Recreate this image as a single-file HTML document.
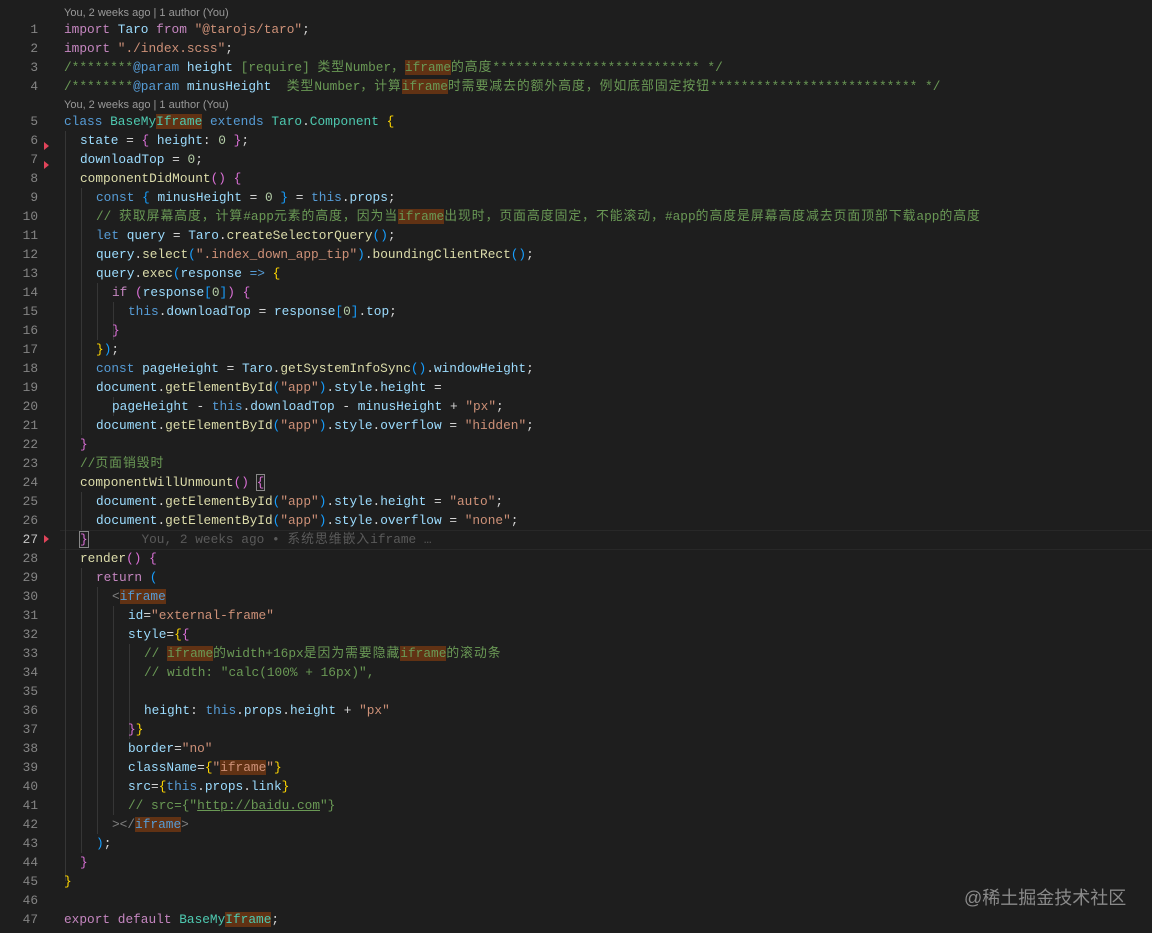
<!DOCTYPE html>
<html><head><meta charset="utf-8"><style>
body{margin:0;width:1152px;height:933px;background:#1e1e1e;overflow:hidden;position:relative;font-family:"Liberation Mono","Noto Sans CJK SC",monospace;font-size:12.8px;color:#d4d4d4}
.l{position:absolute;left:0;height:19px;line-height:19px;white-space:pre;width:1152px}
.ln{position:absolute;left:0;width:38px;text-align:right;color:#858585}
.cd{position:absolute;left:64px}
.lens{position:absolute;left:64px;font-family:"Liberation Sans",sans-serif;font-size:11px;color:#999;height:16px;line-height:16px}
.k{color:#c586c0}.b{color:#569cd6}.v{color:#9cdcfe}.t{color:#4ec9b0}.f{color:#dcdcaa}.s{color:#ce9178}.c{color:#6a9955}.n{color:#b5cea8}.g{color:#808080}
.y1{color:#ffd700}.y2{color:#da70d6}.y3{color:#179fff}
.h{background:#613214}
.z{letter-spacing:1px}
.ig{position:absolute;width:1px;background:#363636}
.mk{position:absolute;left:44px;width:0;height:0;border-top:4px solid transparent;border-bottom:4px solid transparent;border-left:5px solid #e0445a}
</style></head><body>
<div class="lens" style="top:5px">You, 2 weeks ago | 1 author (You)</div>
<div class="lens" style="top:97px">You, 2 weeks ago | 1 author (You)</div>
<div style="position:absolute;left:60px;top:530px;width:1092px;height:18px;border-top:1px solid #282828;border-bottom:1px solid #282828"></div>
<div class="ig" style="left:65px;top:131px;height:750px"></div>
<div class="ig" style="left:81px;top:188px;height:247px"></div>
<div class="ig" style="left:81px;top:492px;height:38px"></div>
<div class="ig" style="left:81px;top:568px;height:285px"></div>
<div class="ig" style="left:97px;top:283px;height:57px"></div>
<div class="ig" style="left:97px;top:587px;height:247px"></div>
<div class="ig" style="left:113px;top:302px;height:38px"></div>
<div class="ig" style="left:113px;top:397px;height:19px"></div>
<div class="ig" style="left:113px;top:606px;height:209px"></div>
<div class="ig" style="left:129px;top:644px;height:95px"></div>
<div class="mk" style="top:142px"></div><div class="mk" style="top:161px"></div><div class="mk" style="top:535px"></div>
<div id="code"></div>
<div style="position:absolute;left:964px;top:884px;font-family:'Liberation Sans','Noto Sans CJK SC',sans-serif;font-size:18px;color:#8a8a8a">@稀土掘金技术社区</div>
<script>
var L=[
'<span class="k">import</span> <span class="v">Taro</span> <span class="k">from</span> <span class="s">"@tarojs/taro"</span>;',
'<span class="k">import</span> <span class="s">"./index.scss"</span>;',
'<span class="c">/********</span><span class="b">@param</span> <span class="v">height</span> <span class="c">[require] 类型Number，<span class="h">iframe</span>的高度*************************** */</span>',
'<span class="c">/********</span><span class="b">@param</span> <span class="v">minusHeight</span>  <span class="c">类型Number，计算<span class="h">iframe</span>时需要减去的额外高度，例如底部固定按钮*************************** */</span>',
'<span class="b">class</span> <span class="t">BaseMy<span class="h">Iframe</span></span> <span class="b">extends</span> <span class="t">Taro</span>.<span class="t">Component</span> <span class="y1">{</span>',
'  <span class="v">state</span> = <span class="y2">{</span> <span class="v">height</span>: <span class="n">0</span> <span class="y2">}</span>;',
'  <span class="v">downloadTop</span> = <span class="n">0</span>;',
'  <span class="f">componentDidMount</span><span class="y2">()</span> <span class="y2">{</span>',
'    <span class="b">const</span> <span class="y3">{</span> <span class="v">minusHeight</span> = <span class="n">0</span> <span class="y3">}</span> = <span class="b">this</span>.<span class="v">props</span>;',
'    <span class="c">// 获取屏幕高度，计算#app元素的高度，因为当<span class="h">iframe</span>出现时，页面高度固定，不能滚动，#app的高度是屏幕高度减去页面顶部下载app的高度</span>',
'    <span class="b">let</span> <span class="v">query</span> = <span class="v">Taro</span>.<span class="f">createSelectorQuery</span><span class="y3">()</span>;',
'    <span class="v">query</span>.<span class="f">select</span><span class="y3">(</span><span class="s">".index_down_app_tip"</span><span class="y3">)</span>.<span class="f">boundingClientRect</span><span class="y3">()</span>;',
'    <span class="v">query</span>.<span class="f">exec</span><span class="y3">(</span><span class="v">response</span> <span class="b">=&gt;</span> <span class="y1">{</span>',
'      <span class="k">if</span> <span class="y2">(</span><span class="v">response</span><span class="y3">[</span><span class="n">0</span><span class="y3">]</span><span class="y2">)</span> <span class="y2">{</span>',
'        <span class="b">this</span>.<span class="v">downloadTop</span> = <span class="v">response</span><span class="y3">[</span><span class="n">0</span><span class="y3">]</span>.<span class="v">top</span>;',
'      <span class="y2">}</span>',
'    <span class="y1">}</span><span class="y3">)</span>;',
'    <span class="b">const</span> <span class="v">pageHeight</span> = <span class="v">Taro</span>.<span class="f">getSystemInfoSync</span><span class="y3">()</span>.<span class="v">windowHeight</span>;',
'    <span class="v">document</span>.<span class="f">getElementById</span><span class="y3">(</span><span class="s">"app"</span><span class="y3">)</span>.<span class="v">style</span>.<span class="v">height</span> =',
'      <span class="v">pageHeight</span> - <span class="b">this</span>.<span class="v">downloadTop</span> - <span class="v">minusHeight</span> + <span class="s">"px"</span>;',
'    <span class="v">document</span>.<span class="f">getElementById</span><span class="y3">(</span><span class="s">"app"</span><span class="y3">)</span>.<span class="v">style</span>.<span class="v">overflow</span> = <span class="s">"hidden"</span>;',
'  <span class="y2">}</span>',
'  <span class="c">//页面销毁时</span>',
'  <span class="f">componentWillUnmount</span><span class="y2">()</span> <span class="y2" style="outline:1px solid #888">{</span>',
'    <span class="v">document</span>.<span class="f">getElementById</span><span class="y3">(</span><span class="s">"app"</span><span class="y3">)</span>.<span class="v">style</span>.<span class="v">height</span> = <span class="s">"auto"</span>;',
'    <span class="v">document</span>.<span class="f">getElementById</span><span class="y3">(</span><span class="s">"app"</span><span class="y3">)</span>.<span class="v">style</span>.<span class="v">overflow</span> = <span class="s">"none"</span>;',
'  <span class="y2" style="outline:1px solid #888">}</span>       <span style="color:#5a5a5a">You, 2 weeks ago • 系统思维嵌入iframe …</span>',
'  <span class="f">render</span><span class="y2">()</span> <span class="y2">{</span>',
'    <span class="k">return</span> <span class="y3">(</span>',
'      <span class="g">&lt;</span><span class="b h">iframe</span>',
'        <span class="v">id</span>=<span class="s">"external-frame"</span>',
'        <span class="v">style</span>=<span class="y1">{</span><span class="y2">{</span>',
'          <span class="c">// <span class="h">iframe</span>的width+16px是因为需要隐藏<span class="h">iframe</span>的滚动条</span>',
'          <span class="c">// width: "calc(100% + 16px)",</span>',
'',
'          <span class="v">height</span>: <span class="b">this</span>.<span class="v">props</span>.<span class="v">height</span> + <span class="s">"px"</span>',
'        <span class="y2">}</span><span class="y1">}</span>',
'        <span class="v">border</span>=<span class="s">"no"</span>',
'        <span class="v">className</span>=<span class="y1">{</span><span class="s">"<span class="h">iframe</span>"</span><span class="y1">}</span>',
'        <span class="v">src</span>=<span class="y1">{</span><span class="b">this</span>.<span class="v">props</span>.<span class="v">link</span><span class="y1">}</span>',
'        <span class="c">// src={"<u>http://baidu.com</u>"}</span>',
'      <span class="g">&gt;&lt;/</span><span class="b h">iframe</span><span class="g">&gt;</span>',
'    <span class="y3">)</span>;',
'  <span class="y2">}</span>',
'<span class="y1">}</span>',
'',
'<span class="k">export</span> <span class="k">default</span> <span class="t">BaseMy<span class="h">Iframe</span></span>;'
];
var h='';
for(var i=0;i<L.length;i++){var n=i+1;var c=n<=4?29+19*(n-1):121+19*(n-5);
var m=L[i].match(/^ */)[0].length;var s=L[i].slice(m);
s=s.replace(/([\u3000-\u9fff\uff00-\uffef]+)/g,'<span class="z">$1</span>');
h+='<div class="l" style="top:'+(c-9.5)+'px"><span class="ln"'+(n==27?' style="color:#c6c6c6"':'')+'>'+n+'</span><span class="cd" style="left:'+(64+m*8)+'px">'+s+'</span></div>';}
document.getElementById('code').innerHTML=h;
</script>
</body></html>
